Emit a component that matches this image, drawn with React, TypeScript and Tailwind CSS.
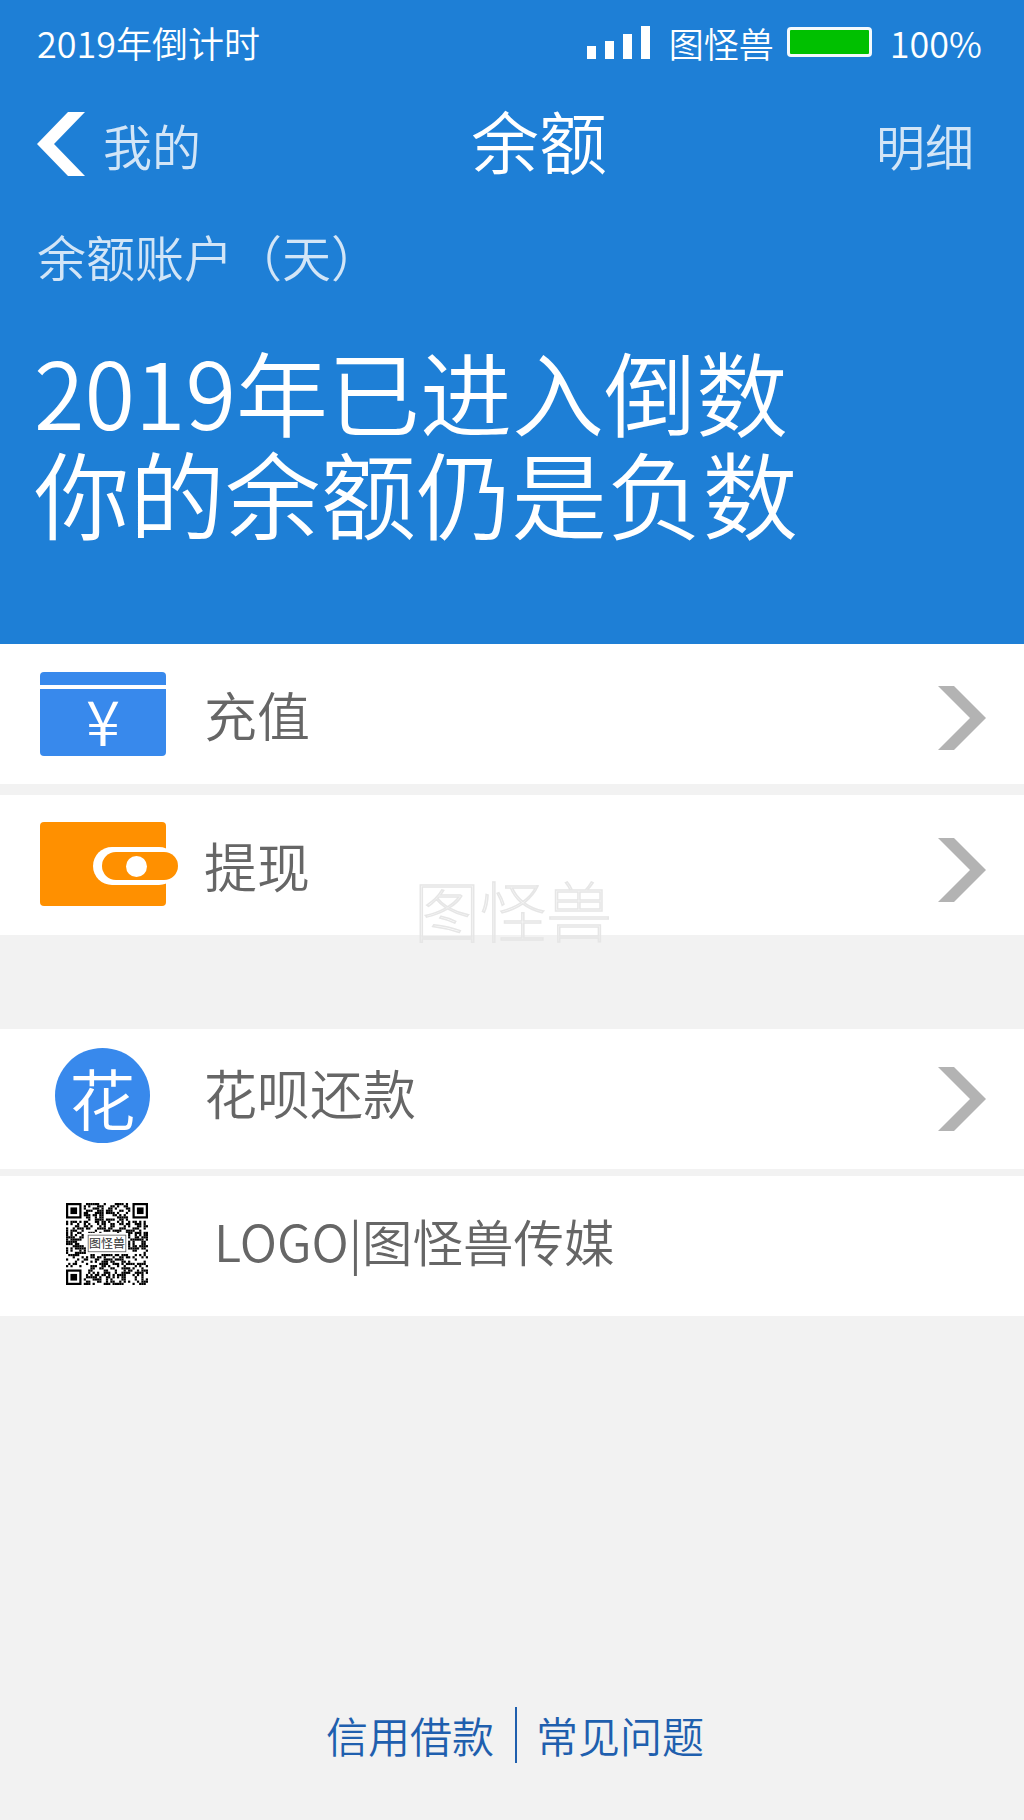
import type { ReactNode } from "react";

const QR_SIZE = 37;

// deterministic module pattern so the code looks the same on every render
function qrModules() {
  const cells: [number, number][] = [];
  let seed = 20190101;
  for (let y = 0; y < QR_SIZE; y++) {
    for (let x = 0; x < QR_SIZE; x++) {
      seed = (seed * 1103515245 + 12345) & 0x7fffffff;
      const inFinder = (x < 8 && y < 8) || (x > QR_SIZE - 9 && y < 8) || (x < 8 && y > QR_SIZE - 9);
      if (!inFinder && (seed >> 16) % 100 < 50) cells.push([x, y]);
    }
  }
  return cells;
}

const modules = qrModules();

function Finder({ x, y }: { x: number; y: number }) {
  return (
    <g>
      <rect x={x} y={y} width={7} height={7} fill="#000" />
      <rect x={x + 1} y={y + 1} width={5} height={5} fill="#fff" />
      <rect x={x + 2} y={y + 2} width={3} height={3} fill="#000" />
    </g>
  );
}

function QrCode() {
  return (
    <svg viewBox={`0 0 ${QR_SIZE} ${QR_SIZE}`} className="w-[82px] h-[82px]">
      {modules.map(([x, y]) => (
        <rect key={`${x}-${y}`} x={x} y={y} width={1} height={1} fill="#000" />
      ))}
      <Finder x={0} y={0} />
      <Finder x={QR_SIZE - 7} y={0} />
      <Finder x={0} y={QR_SIZE - 7} />
      <rect x={9} y={13.5} width={19} height={9.5} fill="#fff" />
      <rect x={10} y={14.5} width={17} height={7.5} fill="none" stroke="#555" strokeWidth={0.35} />
      <text x={18.5} y={20.4} textAnchor="middle" fontSize={5.4} fill="#333" fontFamily="'Noto Sans CJK SC', sans-serif">
        图怪兽
      </text>
    </svg>
  );
}

function Chevron({ className = "" }: { className?: string }) {
  return (
    <svg viewBox="0 0 48 64" className={`w-[48px] h-[64px] ${className}`}>
      <polygon points="0,0 16,0 48,32 16,64 0,64 32,32" fill="#b3b3b3" />
    </svg>
  );
}

function CardIcon() {
  return (
    <div className="w-[126px] h-[84px] flex flex-col">
      <div className="h-[13px] rounded-t-[4px] bg-[#3889ec]" />
      <div className="h-[4px] bg-white" />
      <div className="h-[67px] rounded-b-[4px] bg-[#3889ec] flex items-center justify-center text-white text-[62px] leading-[58px] font-[350]">
        <span className="pb-[8px]">¥</span>
      </div>
    </div>
  );
}

function WalletIcon() {
  return (
    <div className="relative w-[138px] h-[84px]">
      <div className="w-[126px] h-[84px] rounded-[4px] bg-[#ff9000]" />
      <div className="absolute left-[53px] top-[25px] w-[85px] h-[38px] rounded-full bg-white pl-[9px] py-[5px] flex">
        <div className="flex-1 rounded-full bg-[#ff9000] flex items-center pl-[24px]">
          <div className="w-[21px] h-[21px] rounded-full bg-white" />
        </div>
      </div>
    </div>
  );
}

function Row({ icon, label, top, inset, chevron, labelClass }: {
  icon: ReactNode;
  label: string;
  top: string;
  inset: string;
  chevron?: string;
  labelClass: string;
}) {
  return (
    <div className={`${top} h-[140px] bg-white flex items-center pr-[38px] ${inset}`}>
      <div className="flex-1 flex items-center">
        {icon}
        <span className={`leading-none font-[350] text-[#666666] ${labelClass}`}>{label}</span>
      </div>
      {chevron !== undefined && <Chevron className={chevron} />}
    </div>
  );
}

export default function App() {
  return (
    <div className="relative min-h-[1820px] bg-[#f2f2f2] flex flex-col font-['Noto_Sans_CJK_SC',sans-serif]">
      <header className="h-[644px] bg-[#1e7fd6] text-white flex flex-col font-[350]">
        <div className="h-[88px] pl-[37px] pr-[42px] flex items-center justify-between">
          <span className="text-[36px] leading-none mb-[4px]">2019年倒计时</span>
          <div className="flex items-center mb-[4px]">
            <div className="flex items-end gap-[9px] h-[33px]">
              <div className="w-[9px] h-[13px] bg-white" />
              <div className="w-[9px] h-[18px] bg-white" />
              <div className="w-[9px] h-[25px] bg-white" />
              <div className="w-[9px] h-[33px] bg-white" />
            </div>
            <span className="ml-[19px] text-[35px] leading-none">图怪兽</span>
            <div className="ml-[13px] w-[85px] h-[30px] rounded-[4px] border-[3px] border-[#f4f9fd] bg-[#00c000]" />
            <span className="ml-[18px] text-[36px] leading-none">100%</span>
          </div>
        </div>
        <div className="relative h-[112px] pl-[37px] pr-[50px] flex items-center justify-between">
          <div className="flex items-center">
            <svg viewBox="0 0 48 64" className="w-[48px] h-[64px]">
              <polygon points="31,0 48,0 17,32 48,64 31,64 0,32" fill="#fff" />
            </svg>
            <span className="ml-[18px] text-[49px] leading-none text-[#d2e5f7]">我的</span>
          </div>
          <span className="absolute left-0 right-0 pl-[54px] pb-[9px] text-center text-[68px] leading-none">余额</span>
          <span className="text-[49px] leading-none text-[#d2e5f7]">明细</span>
        </div>
        <div className="pl-[37px] mt-[31px] text-[49px] leading-none text-[#d2e5f7]">余额账户（天）</div>
        <div className="pl-[34px] mt-[59px] leading-[102px]">
          <div className="text-[92px]">2019年已进入倒数</div>
          <div className="text-[95.5px]">你的余额仍是负数</div>
        </div>
      </header>

      <Row
        top=""
        inset="pl-[40px]"
        icon={<div className="mr-[38px]"><CardIcon /></div>}
        label="充值"
        labelClass="text-[53px]"
        chevron="mt-[8px]"
      />
      <Row
        top="mt-[11px]"
        inset="pl-[40px]"
        icon={<div className="mr-[26px] mb-[2px]"><WalletIcon /></div>}
        label="提现"
        labelClass="text-[53px]"
        chevron="mt-[10px]"
      />

      <Row
        top="mt-[94px]"
        inset="pl-[55px]"
        icon={
          <div className="mr-[54px] mb-[7px] w-[95px] h-[95px] rounded-full bg-[#3889ec] flex items-center justify-center text-white text-[66px] leading-none font-[350]">
            花
          </div>
        }
        label="花呗还款"
        labelClass="text-[53px] mb-[14px]"
        chevron=""
      />
      <Row
        top="mt-[7px]"
        inset="pl-[66px]"
        icon={<div className="mr-[66px] mb-[4px]"><QrCode /></div>}
        label="LOGO|图怪兽传媒"
        labelClass="text-[50.5px] mb-[12px]"
      />

      <footer className="mt-auto mb-[57px] pl-[6px] flex items-center justify-center text-[42px] leading-none text-[#1f5fae] font-[350]">
        <span>信用借款</span>
        <div className="ml-[21px] mr-[19px] w-[2px] h-[56px] bg-[#1f5fae]" />
        <span>常见问题</span>
      </footer>

      <div className="absolute left-[414px] top-[868px] text-[66px] leading-[80px] font-thin text-transparent [-webkit-text-stroke:1.5px_#e6e6e6]">
        图怪兽
      </div>
    </div>
  );
}
